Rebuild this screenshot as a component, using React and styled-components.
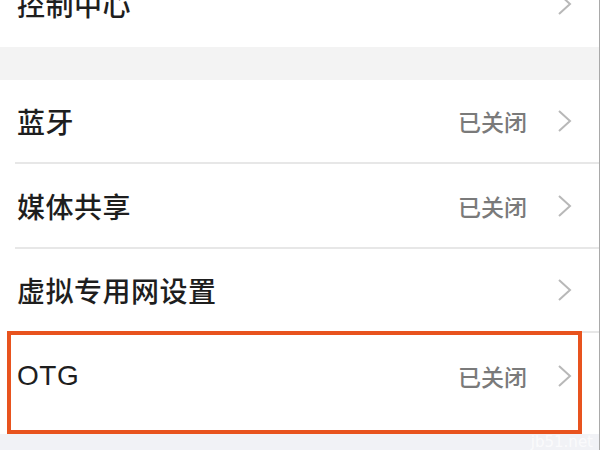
import React from 'react'
import styled, { createGlobalStyle } from 'styled-components'

const GlobalStyle = createGlobalStyle`
  html, body {
    margin: 0;
    padding: 0;
    background: #fff;
  }
  body {
    font-family: "Liberation Sans", "Noto Sans CJK SC", sans-serif;
  }
`

const Page = styled.div`
  width: 599px;
  height: 450px;
  overflow: hidden;
  border-right: 1px solid #a9a9a9;
  background: #f1f2f6;
  display: flex;
  flex-direction: column;
`

const Group = styled.div`
  background: #fff;
  display: flex;
  flex-direction: column;
  margin-top: ${props => props.offset || 0}px;
  padding-bottom: ${props => props.tail || 0}px;
`

const Gap = styled.div`
  height: 33px;
  background: #f3f3f3;
  flex-shrink: 0;
`

const Row = styled.div`
  position: relative;
  height: ${props => props.height}px;
  box-sizing: border-box;
  margin-left: 15px;
  padding: 0 26px 0 2px;
  display: flex;
  align-items: center;
  flex-shrink: 0;
  border-bottom: ${props => (props.divider ? '2px solid #e7e7e7' : 'none')};
`

const Label = styled.span`
  flex: 1;
  font-size: 28px;
  font-weight: 500;
  color: #1e1e1e;
  letter-spacing: 0.5px;
`

const Status = styled.span`
  font-size: 23px;
  font-weight: 500;
  color: #7a7a7a;
  margin-right: 29px;
`

const Chevron = styled.svg`
  width: 17px;
  height: 24px;
  flex-shrink: 0;
`

const Highlight = styled.div`
  position: absolute;
  top: -2px;
  left: -8px;
  right: 17px;
  bottom: -16px;
  border: 4px solid #e8531e;
  pointer-events: none;
`

const Watermark = styled.div`
  align-self: flex-end;
  margin: 0 6px 0 0;
  font-size: 15px;
  line-height: 16px;
  color: rgba(255, 255, 255, 0.7);
  font-family: "DejaVu Sans", sans-serif;
`

const Arrow = () => (
  <Chevron viewBox="0 0 17 24">
    <polyline points="3,2 14,12 3,22" fill="none" stroke="#b8b8b8" strokeWidth="2" />
  </Chevron>
)

const Item = ({ label, status, height, divider, children }) => (
  <Row height={height} divider={divider}>
    <Label>{label}</Label>
    {status && <Status>{status}</Status>}
    <Arrow />
    {children}
  </Row>
)

export default function App() {
  return (
    <Page>
      <GlobalStyle />
      <Group offset={-40}>
        <Item label="控制中心" height={87} />
      </Group>
      <Gap />
      <Group tail={16}>
        <Item label="蓝牙" status="已关闭" height={84} divider />
        <Item label="媒体共享" status="已关闭" height={85} divider />
        <Item label="虚拟专用网设置" height={84} divider />
        <Item label="OTG" status="已关闭" height={85}>
          <Highlight />
        </Item>
      </Group>
      <Watermark>jb51.net</Watermark>
    </Page>
  )
}
